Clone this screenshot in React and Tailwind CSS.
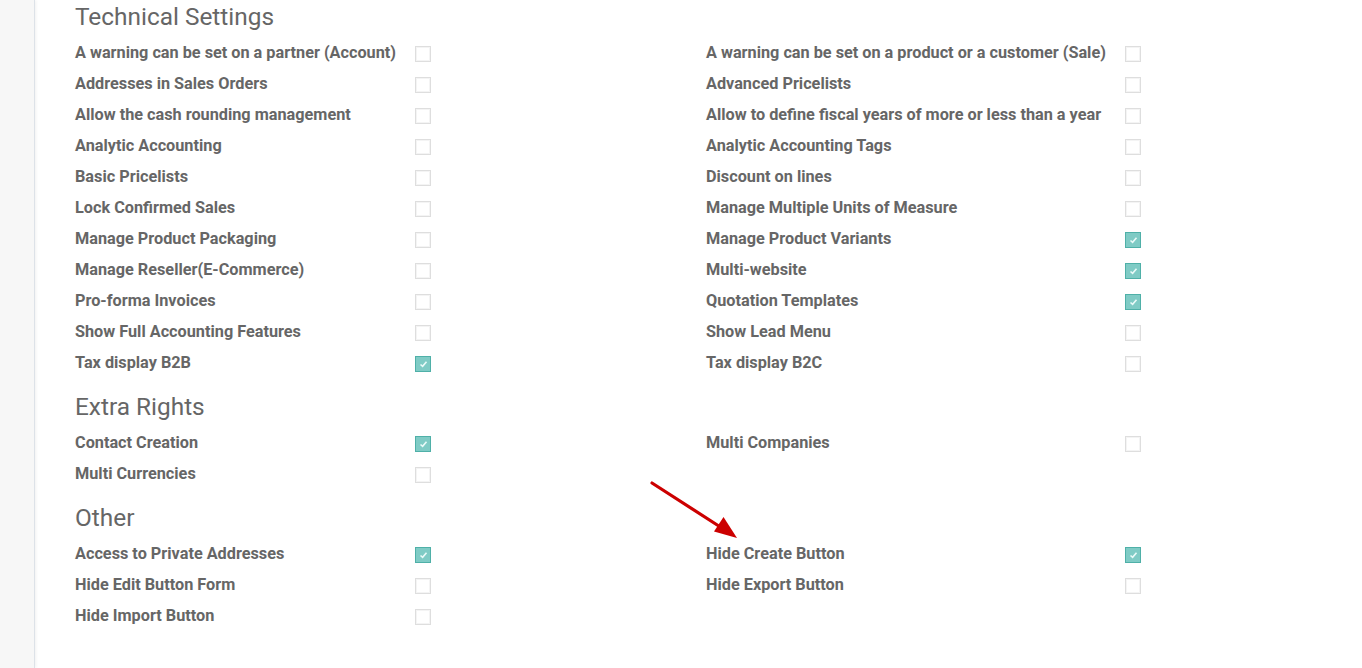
const sections = [
  {
    title: "Technical Settings",
    left: [
      ["A warning can be set on a partner (Account)", false],
      ["Addresses in Sales Orders", false],
      ["Allow the cash rounding management", false],
      ["Analytic Accounting", false],
      ["Basic Pricelists", false],
      ["Lock Confirmed Sales", false],
      ["Manage Product Packaging", false],
      ["Manage Reseller(E-Commerce)", false],
      ["Pro-forma Invoices", false],
      ["Show Full Accounting Features", false],
      ["Tax display B2B", true],
    ],
    right: [
      ["A warning can be set on a product or a customer (Sale)", false],
      ["Advanced Pricelists", false],
      ["Allow to define fiscal years of more or less than a year", false],
      ["Analytic Accounting Tags", false],
      ["Discount on lines", false],
      ["Manage Multiple Units of Measure", false],
      ["Manage Product Variants", true],
      ["Multi-website", true],
      ["Quotation Templates", true],
      ["Show Lead Menu", false],
      ["Tax display B2C", false],
    ],
  },
  {
    title: "Extra Rights",
    left: [
      ["Contact Creation", true],
      ["Multi Currencies", false],
    ],
    right: [["Multi Companies", false]],
  },
  {
    title: "Other",
    left: [
      ["Access to Private Addresses", true],
      ["Hide Edit Button Form", false],
      ["Hide Import Button", false],
    ],
    right: [
      ["Hide Create Button", true],
      ["Hide Export Button", false],
    ],
  },
];

function Check({ on }) {
  if (on)
    return (
      <span className="w-4 h-4 border border-[#4fb0a8] bg-[#7fcbc5] flex items-center justify-center">
        <svg width="9" height="8" viewBox="0 0 9 8" fill="none">
          <path d="M1.5 4.5 L3.6 6.3 L7.5 1.8" stroke="#eafaf8" strokeWidth="1.6" />
        </svg>
      </span>
    );
  return <span className="w-4 h-4 border border-[#dedede] bg-white shadow-[inset_0_0_0_1px_#f4f4f4]" />;
}

function Row({ label, on, w }) {
  return (
    <div className="flex items-center h-[31px]">
      <div className={`${w} text-[16.25px] font-bold text-[#666666] whitespace-nowrap`}>{label}</div>
      <Check on={on} />
    </div>
  );
}

export default function App() {
  return (
    <div className="flex w-[1362px] h-[668px] overflow-hidden bg-white" style={{ fontFamily: "Roboto, 'Liberation Sans', sans-serif" }}>
      <div className="w-[35px] bg-[#f7f7f7] border-r border-[#dde2e8] shadow-[1px_0_3px_rgba(0,0,0,0.06)]" />
      <div className="relative flex-1 pl-[40px]">
        {sections.map((s, i) => (
          <div key={s.title} className={i === 0 ? "" : "mt-[11px]"}>
            <h2 className="h-[34px] leading-[34px] text-[24.4px] text-[#666666] mb-[4px]">{s.title}</h2>
            <div className="flex">
              <div className="w-[631px]">
                {s.left.map(([l, on]) => (
                  <Row key={l} label={l} on={on} w="w-[340px]" />
                ))}
              </div>
              <div>
                {s.right.map(([l, on]) => (
                  <Row key={l} label={l} on={on} w="w-[419px]" />
                ))}
              </div>
            </div>
          </div>
        ))}
        <svg className="absolute left-[610px] top-[478px]" width="110" height="66" viewBox="0 0 110 66">
          <line x1="7" y1="5" x2="80" y2="52" stroke="#cc0000" strokeWidth="3.2" strokeLinecap="round" />
          <polygon points="92,60 69,53.5 78.5,39" fill="#cc0000" />
        </svg>
      </div>
    </div>
  );
}
